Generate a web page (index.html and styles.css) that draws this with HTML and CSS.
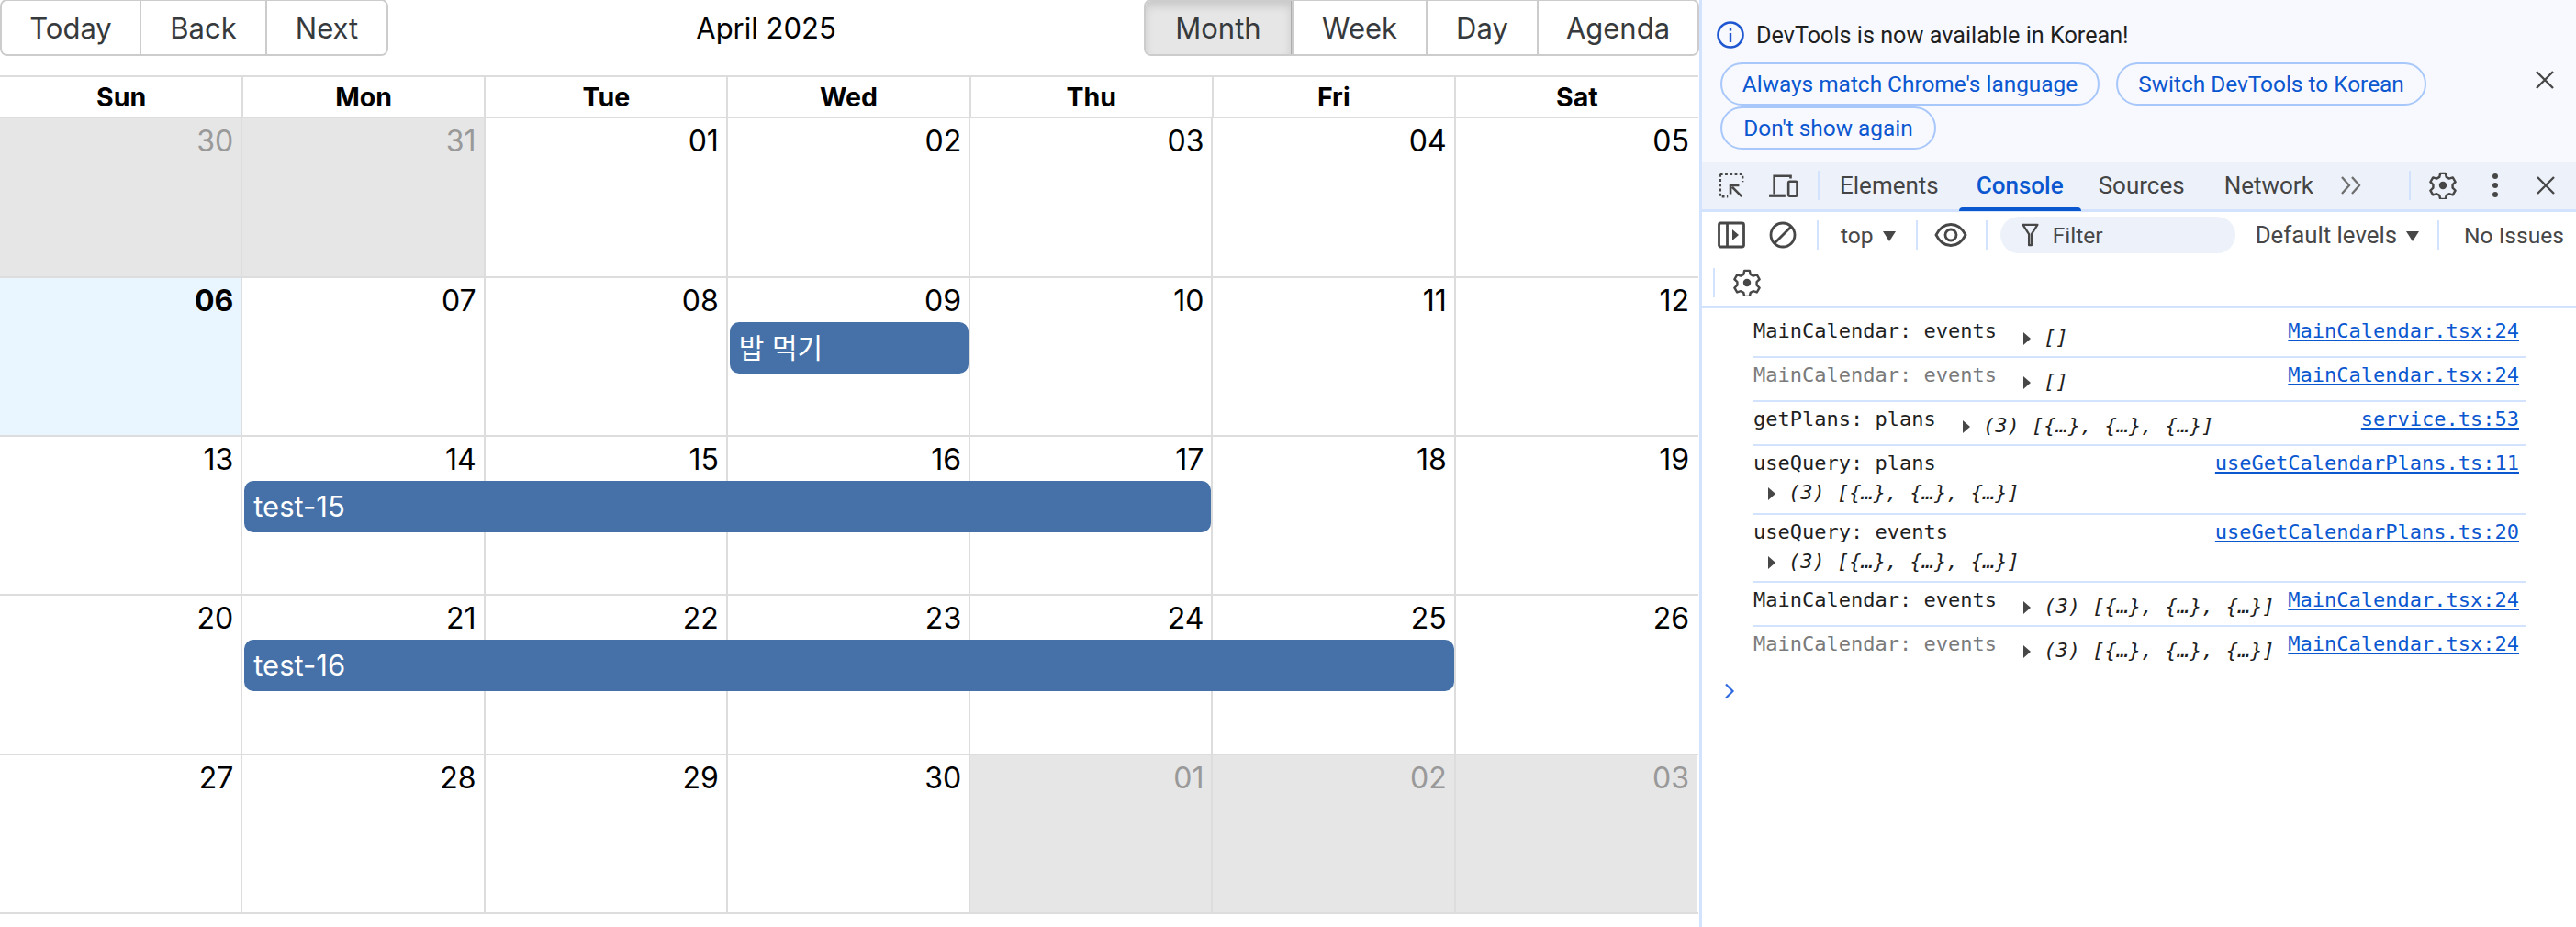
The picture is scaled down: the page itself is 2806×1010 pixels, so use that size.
FILE: index.html
```html
<!DOCTYPE html>
<html lang="en">
<head>
<meta charset="utf-8">
<title>Calendar</title>
<link rel="stylesheet" href="styles.css">
</head>
<body>
<div class="app">
  <main class="calendar">
    <div class="toolbar">
      <div class="btn-group">
        <button class="btn btn-today">Today</button>
        <button class="btn btn-back">Back</button>
        <button class="btn btn-next">Next</button>
      </div>
      <div class="cal-label">April 2025</div>
      <div class="btn-group">
        <button class="btn btn-month active">Month</button>
        <button class="btn btn-week">Week</button>
        <button class="btn btn-day">Day</button>
        <button class="btn btn-agenda">Agenda</button>
      </div>
    </div>
    <div class="month">
      <div class="head"><div>Sun</div><div>Mon</div><div>Tue</div><div>Wed</div><div>Thu</div><div>Fri</div><div>Sat</div></div>
      <div class="week">
        <div class="bg off c1"></div><div class="bg off c2"></div><div class="bg c3"></div><div class="bg c4"></div><div class="bg c5"></div><div class="bg c6"></div><div class="bg c7"></div>
        <div class="num dim c1">30</div><div class="num dim c2">31</div><div class="num c3">01</div><div class="num c4">02</div><div class="num c5">03</div><div class="num c6">04</div><div class="num c7">05</div>
      </div>
      <div class="week">
        <div class="bg today c1"></div><div class="bg c2"></div><div class="bg c3"></div><div class="bg c4"></div><div class="bg c5"></div><div class="bg c6"></div><div class="bg c7"></div>
        <div class="num bold c1">06</div><div class="num c2">07</div><div class="num c3">08</div><div class="num c4">09</div><div class="num c5">10</div><div class="num c6">11</div><div class="num c7">12</div>
        <div class="event ev-wed">밥 먹기</div>
      </div>
      <div class="week">
        <div class="bg c1"></div><div class="bg c2"></div><div class="bg c3"></div><div class="bg c4"></div><div class="bg c5"></div><div class="bg c6"></div><div class="bg c7"></div>
        <div class="num c1">13</div><div class="num c2">14</div><div class="num c3">15</div><div class="num c4">16</div><div class="num c5">17</div><div class="num c6">18</div><div class="num c7">19</div>
        <div class="event ev-15">test-15</div>
      </div>
      <div class="week">
        <div class="bg c1"></div><div class="bg c2"></div><div class="bg c3"></div><div class="bg c4"></div><div class="bg c5"></div><div class="bg c6"></div><div class="bg c7"></div>
        <div class="num c1">20</div><div class="num c2">21</div><div class="num c3">22</div><div class="num c4">23</div><div class="num c5">24</div><div class="num c6">25</div><div class="num c7">26</div>
        <div class="event ev-16">test-16</div>
      </div>
      <div class="week">
        <div class="bg c1"></div><div class="bg c2"></div><div class="bg c3"></div><div class="bg c4"></div><div class="bg off c5"></div><div class="bg off c6"></div><div class="bg off c7"></div>
        <div class="num c1">27</div><div class="num c2">28</div><div class="num c3">29</div><div class="num c4">30</div><div class="num dim c5">01</div><div class="num dim c6">02</div><div class="num dim c7">03</div>
      </div>
    </div>
  </main>

  <aside class="devtools">
    <section class="infobar">
      <div class="info-msg">
        <svg class="i-info" viewBox="0 0 30 30"><circle cx="15" cy="15" r="13.5" fill="none" stroke="#1f57d0" stroke-width="2.6"/><rect x="13.8" y="13" width="2.4" height="10" fill="#1f57d0"/><rect x="13.8" y="8" width="2.4" height="2.6" fill="#1f57d0"/></svg>
        <span>DevTools is now available in Korean!</span>
      </div>
      <div class="info-actions">
        <div class="pills">
          <button class="pill p-always">Always match Chrome's language</button>
          <button class="pill p-switch">Switch DevTools to Korean</button>
          <button class="pill p-dont">Don't show again</button>
        </div>
        <svg class="i-x close-info" viewBox="0 0 24 24"><path d="M3 3 21 21M21 3 3 21" fill="none" stroke="#474747" stroke-width="2.4"/></svg>
      </div>
    </section>

    <nav class="tabs">
      <svg class="ico ico-a" viewBox="0 0 32 32"><path d="M3 3h26v9M3 3v26h9" fill="none" stroke="#474747" stroke-width="2.6" stroke-dasharray="3 2.6"/><path d="M28 29 17 18M15 26V16h10" fill="none" stroke="#474747" stroke-width="2.8"/></svg>
      <svg class="ico ico-b" viewBox="0 0 36 32"><path d="M7 26V5h19v3" fill="none" stroke="#474747" stroke-width="2.8"/><path d="M1 28h19" fill="none" stroke="#474747" stroke-width="3.4"/><rect x="23.5" y="11.5" width="10" height="17" rx="1.5" fill="none" stroke="#474747" stroke-width="2.8"/></svg>
      <span class="sep s-tabs"></span>
      <span class="tab t-el">Elements</span>
      <span class="tab t-con on">Console</span>
      <span class="tab t-src">Sources</span>
      <span class="tab t-net">Network</span>
      <svg class="ico-more" viewBox="0 0 26 24"><path d="M3 3l8 9-8 9M14 3l8 9-8 9" fill="none" stroke="#6f6f6f" stroke-width="2.3"/></svg>
      <span class="sep s-right"></span>
      <svg class="ico gear g-top" viewBox="0 0 32 32"><path d="M13 2h6l1 4.300 3.200 1.800 4.300-1.300 3 5.200-3.200 3v3.900l3.200 3-3 5.200-4.300-1.300-3.200 1.800-1 4.400h-6l-1-4.400-3.200-1.800-4.300 1.300-3-5.200 3.200-3v-3.900l-3.200-3 3-5.200 4.300 1.300L12 6.300z" fill="none" stroke="#474747" stroke-width="2.6" stroke-linejoin="round"/><circle cx="16" cy="16" r="4.500" fill="#474747"/></svg>
      <svg class="ico-dots" viewBox="0 0 8 28"><circle cx="4" cy="4" r="3" fill="#474747"/><circle cx="4" cy="14" r="3" fill="#474747"/><circle cx="4" cy="24" r="3" fill="#474747"/></svg>
      <svg class="i-x close-tabs" viewBox="0 0 24 24"><path d="M3 3 21 21M21 3 3 21" fill="none" stroke="#474747" stroke-width="2.4"/></svg>
    </nav>

    <div class="con-bar">
      <div class="con-row">
        <svg class="ico ico-side" viewBox="0 0 30 30"><rect x="1.500" y="2" width="27" height="26" rx="2" fill="none" stroke="#474747" stroke-width="2.8"/><path d="M10.500 2v26" stroke="#474747" stroke-width="2.8"/><path d="M16 9l7 6-7 6z" fill="#474747"/></svg>
        <svg class="ico ico-block" viewBox="0 0 30 30"><circle cx="15" cy="15" r="13" fill="none" stroke="#474747" stroke-width="2.8"/><path d="M24.500 5.500 5.500 24.500" stroke="#474747" stroke-width="2.8"/></svg>
        <span class="sep s-c1"></span>
        <span class="top-sel">top</span><span class="arrow"></span>
        <span class="sep s-c2"></span>
        <svg class="ico-eye" viewBox="0 0 36 28"><path d="M2 14C6 6 11 2.500 18 2.500S30 6 34 14c-4 8-9 11.500-16 11.500S6 22 2 14z" fill="none" stroke="#474747" stroke-width="2.800"/><circle cx="18" cy="14" r="6" fill="none" stroke="#474747" stroke-width="2.800"/></svg>
        <span class="sep s-c3"></span>
        <div class="filter">
          <svg class="i-filter" viewBox="0 0 20 30"><path d="M1.500 3h17l-7 11v13h-3V14z" fill="none" stroke="#474747" stroke-width="2.400" stroke-linejoin="round"/></svg>
          <span>Filter</span>
        </div>
        <span class="levels">Default levels</span><span class="arrow"></span>
        <span class="sep s-c4"></span>
        <span class="issues">No Issues</span>
      </div>
      <div class="con-row2">
        <span class="sep s-c5"></span>
        <svg class="ico gear g-bottom" viewBox="0 0 32 32"><path d="M13 2h6l1 4.300 3.200 1.800 4.300-1.300 3 5.200-3.200 3v3.900l3.200 3-3 5.200-4.300-1.300-3.200 1.800-1 4.400h-6l-1-4.400-3.200-1.800-4.300 1.300-3-5.200 3.200-3v-3.900l-3.200-3 3-5.200 4.300 1.300L12 6.300z" fill="none" stroke="#474747" stroke-width="2.600" stroke-linejoin="round"/><circle cx="16" cy="16" r="4.500" fill="#474747"/></svg>
      </div>
    </div>

    <div class="logs">
      <div class="log"><div class="log-main"><span class="msg">MainCalendar: events</span> <span class="obj"><i class="tri"></i>[]</span></div><a class="src">MainCalendar.tsx:24</a></div>
      <div class="log"><div class="log-main"><span class="msg faded">MainCalendar: events</span> <span class="obj"><i class="tri"></i>[]</span></div><a class="src">MainCalendar.tsx:24</a></div>
      <div class="log"><div class="log-main"><span class="msg">getPlans: plans</span> <span class="obj"><i class="tri"></i>(3) [{…}, {…}, {…}]</span></div><a class="src">service.ts:53</a></div>
      <div class="log tall"><div class="log-main"><div class="msg">useQuery: plans</div><div class="obj under"><i class="tri"></i>(3) [{…}, {…}, {…}]</div></div><a class="src">useGetCalendarPlans.ts:11</a></div>
      <div class="log tall"><div class="log-main"><div class="msg">useQuery: events</div><div class="obj under"><i class="tri"></i>(3) [{…}, {…}, {…}]</div></div><a class="src">useGetCalendarPlans.ts:20</a></div>
      <div class="log"><div class="log-main"><span class="msg">MainCalendar: events</span> <span class="obj"><i class="tri"></i>(3) [{…}, {…}, {…}]</span></div><a class="src">MainCalendar.tsx:24</a></div>
      <div class="log last"><div class="log-main"><span class="msg faded">MainCalendar: events</span> <span class="obj"><i class="tri"></i>(3) [{…}, {…}, {…}]</span></div><a class="src">MainCalendar.tsx:24</a></div>
      <svg class="prompt" viewBox="0 0 12 18"><path d="M2 1.500 9.500 9 2 16.500" fill="none" stroke="#2f6ae0" stroke-width="2.200"/></svg>
    </div>
  </aside>
</div>
</body>
</html>
```
FILE: styles.css
```css
* { box-sizing: border-box; }
html, body { margin: 0; height: 100%; background: #fff; overflow: hidden; }
.app { display: flex; width: 2806px; height: 1010px; font-family: Inter, "Liberation Sans", "Noto Sans CJK KR", sans-serif; }

/* calendar */
.calendar { width: 1851px; flex: none; }
.toolbar { height: 82px; display: flex; justify-content: space-between; align-items: flex-start; }
.btn-group { display: flex; height: 62px; margin-top: -1px; border: 2px solid #ccc; border-radius: 8px; overflow: hidden; }
.btn { height: 100%; border: 0; border-left: 2px solid #ccc; background: #fff; color: #373a3c; font: 400 31px Inter, "Liberation Sans", sans-serif; padding: 0; text-align: center; }
.btn:first-child { border-left: 0; }
.btn-today { width: 150px; } .btn-back { width: 137px; } .btn-next { width: 132px; }
.btn-month { width: 159px; } .btn-week { width: 146px; } .btn-day { width: 121px; } .btn-agenda { width: 175px; }
.btn.active { background: #e6e6e6; box-shadow: inset 0 6px 10px rgba(0,0,0,.125); border-right: 1px solid #adadad; }
.cal-label { padding-top: 11px; font-size: 31px; line-height: 40px; color: #000; }

.month { width: 1850px; border-top: 2px solid #ddd; border-bottom: 2px solid #ddd; height: 914px; display: grid; grid-template-rows: 45px 174px 173px 173px 174px 171px; }
.head { display: grid; grid-template-columns: repeat(7, 1fr); padding-left: 1px; border-bottom: 2px solid #ddd; }
.head div { font-weight: 700; font-size: 28.5px; line-height: 43px; text-align: center; color: #000; border-right: 2px solid #ddd; }
.head div:last-child { border-right: 0; }
.week { display: grid; grid-template-columns: repeat(7, 1fr); grid-template-rows: 44px 60px 1fr; border-bottom: 2px solid #ddd; }
.week:last-child { border-bottom: 0; }
.bg { grid-row: 1 / -1; border-right: 2px solid #ddd; }
.bg.c7 { border-right-color: transparent; background-clip: padding-box; }
.bg.off { background-color: #e6e6e6; }
.bg.today { background-color: #eaf6ff; }
.num { grid-row: 1; font-size: 32px; line-height: 40px; padding: 5px 10px 0 0; text-align: right; color: #000; height: 44px; position: relative; }
.num.dim { color: #999; }
.num.bold { font-weight: 700; }
.c1 { grid-column: 1; } .c2 { grid-column: 2; } .c3 { grid-column: 3; } .c4 { grid-column: 4; } .c5 { grid-column: 5; } .c6 { grid-column: 6; } .c7 { grid-column: 7; }
.event { grid-row: 2; z-index: 1; height: 56px; margin: 4px 2px 0 2px; background: #4571a8; color: #fff; border-radius: 10px; font-size: 31px; line-height: 56px; padding-left: 10px; }
.ev-wed { grid-column: 4 / span 1; font-family: Inter, "Noto Sans CJK KR", sans-serif; font-size: 30px; }
.ev-15 { grid-column: 2 / span 4; }
.ev-16 { grid-column: 2 / span 5; }

/* devtools */
.devtools { flex: none; width: 955px; border-left: 3px solid #d3e3fd; font-family: Roboto, "Liberation Sans", sans-serif; color: #1f1f1f; display: flex; flex-direction: column; }
.infobar { height: 176px; background: #f8f9fe; padding: 20px 0 0 16px; }
.info-msg { display: flex; align-items: center; gap: 13px; height: 36px; font-size: 25.2px; }
.i-info { width: 30px; height: 30px; flex: none; }
.info-actions { display: flex; justify-content: space-between; margin-top: 12px; }
.pills { width: 800px; display: flex; flex-wrap: wrap; column-gap: 18px; row-gap: 1px; padding-left: 4px; }
.pill { height: 47px; border: 2px solid #a8c7fa; border-radius: 24px; background: #f8f9fe; color: #0b57d0; font: 400 24.4px Roboto, "Liberation Sans", sans-serif; padding: 0; }
.p-always { width: 413px; } .p-switch { width: 338px; } .p-dont { width: 235px; }
.i-x { width: 24px; height: 24px; flex: none; }
.close-info { margin: 7px 22px 0 0; }

.tabs { height: 55px; flex: none; background: #edf2fa; border-bottom: 3px solid #d3e3fd; display: flex; align-items: center; position: relative; font-size: 26px; color: #444; }
.ico { width: 30px; height: 30px; flex: none; }
.ico-a { margin-left: 17px; }
.ico-b { width: 34px; margin-left: 25px; }
.sep { width: 2px; height: 32px; background: #d3e3fd; flex: none; }
.s-tabs { margin-left: 20px; }
.tab { flex: none; }
.t-el { margin-left: 22px; } .t-con { margin-left: 41px; color: #0b57d0; position: relative; font-weight: 500; } .t-src { margin-left: 38px; } .t-net { margin-left: 43px; }
.t-con.on::after { content: ""; position: absolute; left: -19px; right: -19px; top: 39px; height: 4px; background: #0b57d0; border-radius: 4px 4px 0 0; }
.ico-more { width: 26px; height: 24px; margin-left: 28px; flex: none; }
.s-right { margin-left: 50px; }
.g-top { margin-left: 20px; }
.ico-dots { width: 8px; height: 28px; margin-left: 38px; flex: none; }
.close-tabs { margin-left: 39px; flex: none; }

.con-bar { height: 105px; flex: none; border-bottom: 3px solid #d3e3fd; font-size: 24.6px; color: #474747; }
.con-row { height: 50px; display: flex; align-items: center; }
.ico-side { margin-left: 17px; }
.ico-block { margin-left: 26px; }
.s-c1 { margin-left: 22px; }
.top-sel { margin-left: 24px; }
.arrow { width: 0; height: 0; margin-left: 10px; margin-top: 2px; border-left: 7px solid transparent; border-right: 7px solid transparent; border-top: 11px solid #474747; flex: none; }
.s-c2 { margin-left: 22px; }
.ico-eye { width: 36px; height: 28px; margin-left: 18px; flex: none; }
.s-c3 { margin-left: 20px; }
.filter { margin-left: 14px; width: 256px; height: 40px; border-radius: 20px; background: #edf2fa; display: flex; align-items: center; padding-left: 23px; gap: 15px; flex: none; }
.i-filter { width: 19px; height: 28px; flex: none; }
.levels { margin-left: 22px; font-size: 25.8px; }
.s-c4 { margin-left: 20px; }
.issues { margin-left: 27px; }
.con-row2 { height: 52px; display: flex; align-items: center; padding-top: 2px; }
.s-c5 { margin-left: 12px; }
.g-bottom { margin-left: 20px; }

.logs { flex: 1; padding: 6px 0 0 56px; font-family: "DejaVu Sans Mono", monospace; font-size: 22px; color: #1f1f1f; }
.log { display: flex; justify-content: space-between; height: 48px; padding: 5px 8px 0 0; margin-right: 54px; border-bottom: 2px solid #d3e3fd; line-height: 28px; white-space: pre; }
.log.tall { height: 74.5px; }
.log.last { border-bottom: 0; }
.log-main { flex: none; }
.msg.faded { color: #7a7a7a; }
.obj { font-style: italic; position: relative; top: 7px; margin-left: 16px; }
.obj.under { display: block; top: 6px; margin-left: 16px; height: 28px; line-height: 24px; }
.tri { display: inline-block; width: 0; height: 0; border-top: 7px solid transparent; border-bottom: 7px solid transparent; border-left: 8px solid #474747; margin-right: 14px; vertical-align: -1px; }
.src { color: #0b57d0; text-decoration: underline; }
.prompt { display: block; width: 12px; height: 18px; margin: 13px 0 0 -32px; }
```
